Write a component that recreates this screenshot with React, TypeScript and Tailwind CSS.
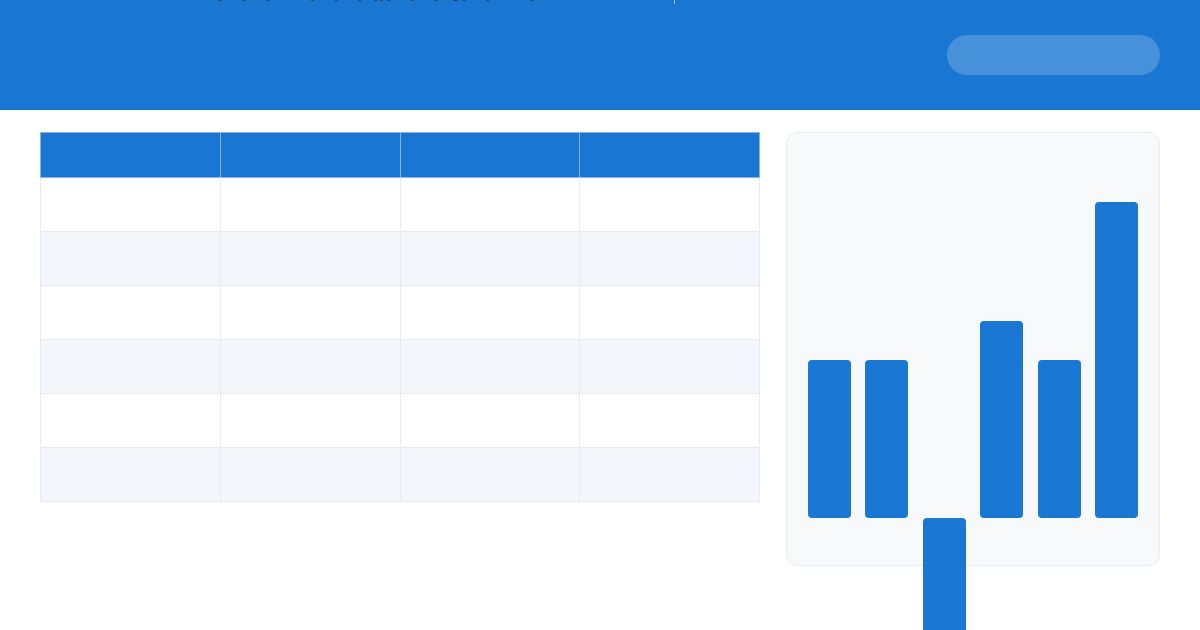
import React from "react";

const rows = [0, 1, 2, 3, 4, 5];
const cols = [0, 1, 2, 3];
const bars = [158, 158, -130, 197, 158, 316];

export default function App() {
  return (
    <div className="w-[1200px] h-[630px] overflow-hidden bg-white" style={{ fontFamily: '"Liberation Sans", Arial, sans-serif' }}>
      <header className="h-[110px] bg-[#1976d2] overflow-hidden">
        <div className="flex items-start h-[6px] -mt-[16px] pl-[212px]">
          <span className="text-[14px] leading-[18px] text-[#333a44] tracking-[3px] whitespace-nowrap">
            ,y ,y ,y ,, ,y ,y ,y jjy ,y ,y gy ,y ,, ,y
          </span>
          <div className="ml-[133px] mt-[16px] w-[1px] h-[4px] bg-[#9fbfe6]" />
        </div>
        <div className="flex justify-end pr-[40px] pt-[45px]">
          <div className="w-[213px] h-[40px] rounded-full bg-white/20" />
        </div>
      </header>
      <main className="flex gap-[26px] px-[40px] pt-[22px]">
        <div className="w-[720px] h-[370px] flex flex-col">
          <div className="flex h-[46px] bg-[#1976d2] border border-[#86b4e6]">
            {cols.map((c) => (
              <div key={c} className={`flex-1 ${c < 3 ? "border-r border-[#86b4e6]" : ""}`} />
            ))}
          </div>
          {rows.map((r) => (
            <div key={r} className={`flex h-[54px] border-x border-b border-[#e6ebf2] ${r % 2 === 1 ? "bg-[#f3f6fb]" : "bg-white"}`}>
              {cols.map((c) => (
                <div key={c} className={`flex-1 ${c < 3 ? "border-r border-[#e6ebf2]" : ""}`} />
              ))}
            </div>
          ))}
        </div>
        <div className="w-[374px] h-[434px] rounded-[12px] bg-[#f8f9fb] border border-[#e8ecf2] px-[21px] pt-[69px]">
          <div className="flex justify-between h-[316px] items-end">
            {bars.map((h, i) => (
              <div key={i} className="w-[43px] h-full flex flex-col justify-end">
                {h > 0 ? (
                  <div className="w-full rounded-[4px] bg-[#1a77d4]" style={{ height: h }} />
                ) : (
                  <div className="h-0 relative">
                    <div className="absolute top-0 left-0 w-[43px] rounded-[4px] bg-[#1a77d4]" style={{ height: -h }} />
                  </div>
                )}
              </div>
            ))}
          </div>
        </div>
      </main>
    </div>
  );
}
